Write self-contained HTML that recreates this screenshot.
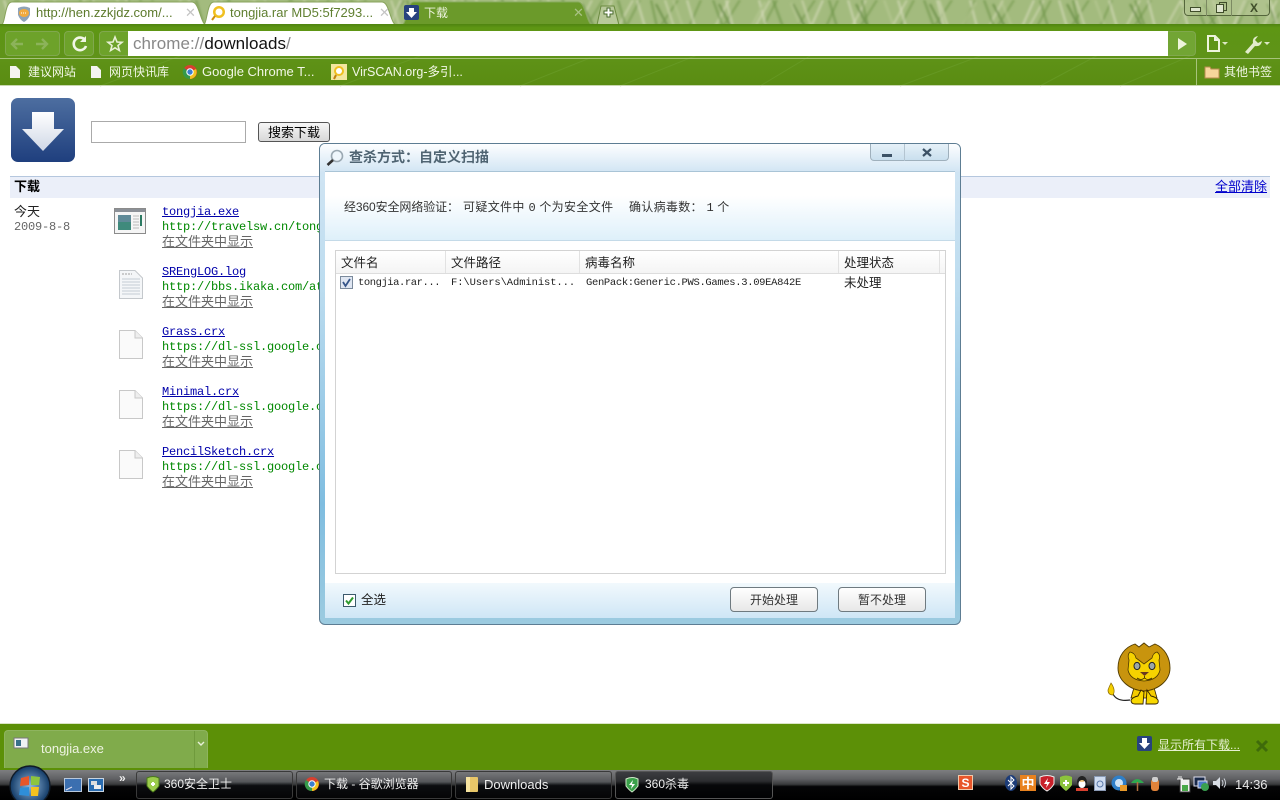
<!DOCTYPE html>
<html lang="zh"><head><meta charset="utf-8"><title>下载</title>
<style>
*{box-sizing:border-box}
html,body{margin:0;padding:0;width:1280px;height:800px;overflow:hidden;background:#fff;font:12px "Liberation Sans","Noto Sans CJK SC",sans-serif;color:#000}
.a{position:absolute;white-space:nowrap}
svg{position:absolute;overflow:visible}
.m{font-family:"Liberation Mono","Noto Sans CJK SC",monospace;font-size:12px;letter-spacing:-.2px;line-height:15px}
.tab{height:24px;top:1px;line-height:24px;font-size:13px;color:#5c7a2c}
.bm{top:63px;color:#f2f7e6;font-size:12px;line-height:18px}
.lk{color:#00a;text-decoration:underline}
.gr{color:#080}
.sh{color:#666;text-decoration:underline;font-family:"Liberation Sans","Noto Sans CJK SC",sans-serif;font-size:13px;letter-spacing:0}
.tb{top:771px;height:28px;border:1px solid #3a3a3a;border-radius:3px;background:linear-gradient(#77787a 0,#55565a 38%,#0c0d10 52%,#050506 100%);color:#eee;font-size:12px;line-height:25px}
.hd{top:251px;height:23px;border-right:1px solid #e2e2e2;line-height:25px;padding-left:5px;color:#222;font-size:12.5px;background:linear-gradient(#fff,#f4f4f4)}
.btn{top:587px;width:88px;height:25px;border:1px solid #6f7a80;border-radius:4px;background:linear-gradient(#fff,#e8e8e8);text-align:center;line-height:24px;color:#333;font-size:12px}
.rw{top:276px;font-size:10.5px;color:#222;line-height:15px}
</style></head><body>

<!-- tab strip: grass -->
<div class="a" style="left:0;top:0;width:1280px;height:27px;background:#a3bb7e;overflow:hidden">
<svg width="1280" height="27" style="left:0;top:0" fill="none">
<defs>
<filter id="bl" x="-5%" y="-20%" width="110%" height="140%"><feGaussianBlur stdDeviation="1"/></filter>
<pattern id="p1" width="137" height="27" patternUnits="userSpaceOnUse">
<g stroke-width="2.2" fill="none">
<path d="M4 27 16 0M38 27 55 0M78 27 92 0M112 27 130 0" stroke="#6f9648"/>
<path d="M30 27 44 0M70 27 85 0M126 27 117 0" stroke="#d6dbb8"/>
<path d="M46 27 34 4M120 27 108 4" stroke="#557f32"/>
</g>
</pattern>
<pattern id="p2" width="211" height="27" patternUnits="userSpaceOnUse">
<g stroke-width="2.4" fill="none">
<path d="M12 27 4 0M62 27 54 0M100 27 93 0M133 27 126 0M178 27 190 0" stroke="#d9ddc0"/>
<path d="M24 27 18 0M90 27 80 0M150 27 140 0M204 27 196 0" stroke="#6a9244"/>
<path d="M50 27 40 0M118 27 132 2M168 27 158 3" stroke="#b9c994"/>
</g>
</pattern>
</defs>
<g filter="url(#bl)"><rect width="1280" height="27" fill="url(#p1)" opacity=".6"/><rect width="1280" height="27" fill="url(#p2)" opacity=".6"/></g>
</svg>
</div>

<!-- tabs -->
<svg width="640" height="27" style="left:0;top:0">
<path d="M400 26 C408 26 406 2 414 2H578C586 2 586 26 594 26Z" fill="#6b9a2a" stroke="#86a95a"/>
<path d="M597 25 L601 6H614L619 25Z" fill="#b8c99a" stroke="#6b8a40"/>
<path d="M604 11h3v-3h3v3h3v3h-3v3h-3v-3h-3z" fill="#fff" stroke="#46682a"/>
<path d="M0 26 C6 26 4 2 12 2H192C200 2 200 26 208 26Z" fill="#fff" stroke="#88a35c"/>
<path d="M202 26 C208 26 206 2 214 2H382C390 2 390 26 398 26Z" fill="#fff" stroke="#88a35c"/>
</svg>
<svg width="16" height="16" style="left:16px;top:6px"><path d="M2 2Q8-1 14 2V9Q12 14 8 16 4 14 2 9Z" fill="#8fa3b8"/><ellipse cx="8" cy="7" rx="5" ry="4" fill="#f2a93c"/><path d="M5 7h6" stroke="#fff" stroke-dasharray="1 1"/></svg>
<div class="a tab" style="left:36px;width:140px">http://hen.zzkjdz.com/...</div>
<div class="a" style="left:185px;top:5px;color:#c4c4c4;font-size:13px">✕</div>
<svg width="16" height="16" style="left:210px;top:5px"><circle cx="9" cy="7" r="6" fill="#f0c020"/><circle cx="9" cy="7" r="3.5" fill="#fff"/><path d="M5 11 2 15" stroke="#d09010" stroke-width="2"/></svg>
<div class="a tab" style="left:230px;width:146px;color:#5f7f30">tongjia.rar MD5:5f7293...</div>
<div class="a" style="left:379px;top:5px;color:#c4c4c4;font-size:13px">✕</div>
<svg width="16" height="16" style="left:404px;top:5px"><rect width="15" height="15" rx="2" fill="#27427e"/><path d="M5 3h5v4h3L7.5 13 2 7h3z" fill="#fff"/></svg>
<div class="a tab" style="left:424px;color:#eef3df;font-size:12px">下载</div>
<div class="a" style="left:573px;top:5px;color:#a9c285;font-size:13px">✕</div>

<!-- window controls -->
<div class="a" style="left:1184px;top:0;width:86px;height:16px;border:1px solid #55663c;border-top:0;border-radius:0 0 4px 4px;background:rgba(190,205,160,.45)"></div>
<div class="a" style="left:1206px;top:0;width:1px;height:16px;background:#7c8a62"></div>
<div class="a" style="left:1231px;top:0;width:1px;height:16px;background:#7c8a62"></div>
<div class="a" style="left:1190px;top:7px;width:11px;height:5px;border:1px solid #3f4d2a;background:#dfe6cf"></div>
<div class="a" style="left:1219px;top:2px;width:8px;height:9px;border:1px solid #3f4d2a"></div>
<div class="a" style="left:1216px;top:4px;width:8px;height:9px;border:1px solid #3f4d2a;background:#dfe6cf"></div>
<div class="a" style="left:1250px;top:1px;color:#3f4d2a;font-size:12px;font-weight:bold;line-height:14px">X</div>

<!-- toolbar -->
<div class="a" style="left:0;top:24px;width:1280px;height:62px;background:linear-gradient(#4f8410 0,#5e9614 6%,#5f9318 50%,#5a8c12 100%)"></div>
<svg width="1280" height="60" style="left:0;top:26px" fill="none" stroke="#74a436" opacity=".4"><path d="M620 60 700 28M760 60 810 30M900 60 980 30M1040 60 1100 28M100 60 180 30M340 60 420 30M520 60 590 32M1120 60 1190 30"/></svg>
<div class="a" style="left:0;top:58px;width:1280px;height:1px;background:#a7c37b"></div>
<div class="a" style="left:0;top:85px;width:1280px;height:1px;background:#c9d7b0"></div>
<div class="a" style="left:5px;top:31px;width:55px;height:25px;border:1px solid #80a84e;border-radius:4px;background:#6da22a"></div>
<div class="a" style="left:64px;top:31px;width:30px;height:25px;border:1px solid #80a84e;border-radius:4px;background:#6da22a"></div>
<div class="a" style="left:99px;top:31px;width:30px;height:25px;border:1px solid #80a84e;border-radius:4px 0 0 4px;background:#6da22a"></div>
<div class="a" style="left:1168px;top:31px;width:28px;height:25px;border:1px solid #80a84e;border-left:0;border-radius:0 4px 4px 0;background:#72a534"></div>
<svg width="50" height="16" style="left:10px;top:36px" fill="none" stroke="#8cb35a" stroke-width="2.4"><path d="M2 8H13M7 3 2 8 7 13M26 8H37M32 3 37 8 32 13"/></svg>
<svg width="18" height="18" style="left:71px;top:35px" fill="none" stroke="#f1f6e6" stroke-width="2.6"><path d="M14 5A6.3 6.3 0 1 0 15 11"/><path d="M15 1V7H9Z" fill="#f1f6e6" stroke="none"/></svg>
<svg width="18" height="18" style="left:106px;top:35px" fill="none" stroke="#e8f0d4" stroke-width="1.6"><path d="M9 2 11 7 16 7.3 12 10.5 13.4 15.5 9 12.8 4.6 15.5 6 10.5 2 7.3 7 7Z"/></svg>
<div class="a" style="left:128px;top:31px;width:1040px;height:25px;background:#fff"></div>
<div class="a" style="left:133px;top:33px;font-size:17px;line-height:21px;color:#888;letter-spacing:.05px">chrome://<span style="color:#111">downloads</span>/</div>
<svg width="12" height="14" style="left:1177px;top:37px"><path d="M1 1 10 7 1 13Z" fill="#eef4dc"/></svg>
<svg width="22" height="18" style="left:1206px;top:35px" fill="none" stroke="#eef4dc" stroke-width="2"><path d="M2 1H9L13 5V16H2Z"/><path d="M9 1V5H13"/><path d="M16 7h6l-3 3z" fill="#dce7c4" stroke="none"/></svg>
<svg width="28" height="20" style="left:1244px;top:35px"><path d="M1 17 9 8Q8 2 14 1L11 5 14 8 18 6Q17 12 11 11L4 19Z" fill="#e2ebcc"/><path d="M20 7h6l-3 3z" fill="#dce7c4"/></svg>

<!-- bookmarks -->
<svg width="12" height="14" style="left:9px;top:65px"><path d="M1 1H7L11 5V13H1Z" fill="#f4f4f0"/></svg>
<div class="a bm" style="left:28px">建议网站</div>
<svg width="12" height="14" style="left:90px;top:65px"><path d="M1 1H7L11 5V13H1Z" fill="#f4f4f0"/></svg>
<div class="a bm" style="left:109px">网页快讯库</div>
<svg width="16" height="16" style="left:182px;top:64px"><circle cx="8" cy="8" r="7" fill="#d8402f"/><path d="M8 8 14 5A7 7 0 0 1 8 15Z" fill="#f1c21f"/><path d="M8 8 8 15A7 7 0 0 1 2 4Z" fill="#35994a"/><circle cx="8" cy="8" r="3.2" fill="#3b7fd0" stroke="#fff"/></svg>
<div class="a bm" style="left:202px;font-size:13px">Google Chrome T...</div>
<svg width="16" height="16" style="left:331px;top:64px"><rect width="16" height="16" fill="#f4e7a0"/><circle cx="8" cy="7" r="5" fill="#f0c020"/><circle cx="8" cy="7" r="3" fill="#fff"/><path d="M5 11 3 15" stroke="#c08010" stroke-width="2"/></svg>
<div class="a bm" style="left:352px;font-size:12.5px">VirSCAN.org-多引...</div>
<div class="a" style="left:1196px;top:58px;width:1px;height:27px;background:#a7c37b"></div>
<svg width="16" height="14" style="left:1204px;top:65px"><path d="M1 2H6L7 4H15V13H1Z" fill="#f7d69c" stroke="#b98c50"/></svg>
<div class="a bm" style="left:1224px">其他书签</div>

<!-- page -->
<svg width="65" height="65" style="left:11px;top:98px"><defs><linearGradient id="g1" x1="0" y1="0" x2="0" y2="1"><stop offset="0" stop-color="#4d6ea0"/><stop offset="1" stop-color="#1f3f7e"/></linearGradient><linearGradient id="g2" x1="0" y1="0" x2="0" y2="1"><stop offset="0" stop-color="#fff"/><stop offset="1" stop-color="#cfd7e6"/></linearGradient></defs><rect x="0" y="0" width="64" height="64" rx="7" fill="url(#g1)"/><path d="M21 14H43V31H53L32 53 11 31H21Z" fill="url(#g2)"/></svg>
<div class="a" style="left:91px;top:121px;width:155px;height:22px;border:1px solid #aaa;background:#fff"></div>
<div class="a" style="left:258px;top:122px;width:72px;height:20px;border:1px solid #555;border-radius:3px;background:linear-gradient(#f6f6f6,#d8d8d8);text-align:center;line-height:20px;font-size:13px">搜索下载</div>

<div class="a" style="left:10px;top:176px;width:1260px;height:22px;background:#ebeff9;border-top:1px solid #b5c7de"></div>
<div class="a" style="left:14px;top:179px;font-weight:bold;font-size:13px;line-height:16px">下载</div>
<div class="a" style="left:1215px;top:179px;font-size:13px;line-height:16px;color:#00c;text-decoration:underline">全部清除</div>
<div class="a" style="left:14px;top:204px;font-size:13px;line-height:16px;color:#222">今天</div>
<div class="a m" style="left:14px;top:220px;color:#666">2009-8-8</div>

<svg width="32" height="28" style="left:114px;top:208px"><rect x=".5" y=".5" width="31" height="25" fill="#f5f5f5" stroke="#8b8b8b"/><rect x="1" y="1" width="30" height="3" fill="#8b9097"/><rect x="4" y="7" width="13" height="15" fill="#3f8a7c"/><rect x="4" y="7" width="13" height="7" fill="#5f8a98"/><path d="M19 8h6M19 11h6M19 14h6M19 17h6M19 20h6" stroke="#bbb"/><rect x="26" y="7" width="2" height="11" fill="#2c7a62"/></svg>
<div class="a m lk" style="left:162px;top:205px">tongjia.exe</div>
<div class="a m gr" style="left:162px;top:220px;width:158px;overflow:hidden">http://travelsw.cn/tongjia.exe</div>
<div class="a sh" style="left:162px;top:234px;line-height:15px">在文件夹中显示</div>

<svg width="24" height="30" style="left:119px;top:270px"><path d="M.5 .5H16L23.5 8V28.5H.5Z" fill="#f4f6f8" stroke="#c4c8cc"/><path d="M3 9H21M3 12H21M3 15H21M3 18H21M3 21H21M3 24H21" stroke="#c4ccd4"/><path d="M3 4h10" stroke="#a0a0a0" stroke-dasharray="2 1"/></svg>
<div class="a m lk" style="left:162px;top:265px">SREngLOG.log</div>
<div class="a m gr" style="left:162px;top:280px;width:158px;overflow:hidden">http://bbs.ikaka.com/attachment</div>
<div class="a sh" style="left:162px;top:294px;line-height:15px">在文件夹中显示</div>

<svg width="24" height="30" style="left:119px;top:330px"><path d="M.5 .5H16L23.5 8V28.5H.5Z" fill="#fafafa" stroke="#c8c8c8"/><path d="M16 .5V8H23.5" fill="#eee" stroke="#c8c8c8"/></svg>
<div class="a m lk" style="left:162px;top:325px">Grass.crx</div>
<div class="a m gr" style="left:162px;top:340px;width:158px;overflow:hidden">https://dl-ssl.google.com/chrome</div>
<div class="a sh" style="left:162px;top:354px;line-height:15px">在文件夹中显示</div>

<svg width="24" height="30" style="left:119px;top:390px"><path d="M.5 .5H16L23.5 8V28.5H.5Z" fill="#fafafa" stroke="#c8c8c8"/><path d="M16 .5V8H23.5" fill="#eee" stroke="#c8c8c8"/></svg>
<div class="a m lk" style="left:162px;top:385px">Minimal.crx</div>
<div class="a m gr" style="left:162px;top:400px;width:158px;overflow:hidden">https://dl-ssl.google.com/chrome</div>
<div class="a sh" style="left:162px;top:414px;line-height:15px">在文件夹中显示</div>

<svg width="24" height="30" style="left:119px;top:450px"><path d="M.5 .5H16L23.5 8V28.5H.5Z" fill="#fafafa" stroke="#c8c8c8"/><path d="M16 .5V8H23.5" fill="#eee" stroke="#c8c8c8"/></svg>
<div class="a m lk" style="left:162px;top:445px">PencilSketch.crx</div>
<div class="a m gr" style="left:162px;top:460px;width:158px;overflow:hidden">https://dl-ssl.google.com/chrome</div>
<div class="a sh" style="left:162px;top:474px;line-height:15px">在文件夹中显示</div>

<!-- dialog -->
<div class="a" style="left:319px;top:143px;width:642px;height:482px;border:1px solid #5d7d93;border-radius:6px;background:linear-gradient(#fff 0,#cfe4f3 6%,#bcdcef 30%,#7fbde0 75%,#9ccbe0 100%);overflow:hidden"></div>
<div class="a" style="left:320px;top:144px;width:640px;height:27px;border-radius:5px 5px 0 0;background:linear-gradient(#fdfeff,#d3e6f4)"></div>
<svg width="18" height="18" style="left:326px;top:149px"><circle cx="11" cy="7" r="5.5" fill="#eef6fc" stroke="#9aa8b2" stroke-width="1.6"/><path d="M7 11 1.5 16" stroke="#333" stroke-width="2.6"/></svg>
<div class="a" style="left:349px;top:148px;font-size:14px;line-height:18px;font-weight:bold;color:#4f6472">查杀方式：自定义扫描</div>
<div class="a" style="left:870px;top:144px;width:79px;height:17px;border:1px solid #9fb0bc;border-top:0;border-radius:0 0 4px 4px;background:linear-gradient(#e6f1f8,#c9dfee)"></div>
<div class="a" style="left:904px;top:144px;width:1px;height:17px;background:#b4c5d1"></div>
<div class="a" style="left:882px;top:154px;width:10px;height:3px;background:#3c5266"></div>
<svg width="10" height="10" style="left:922px;top:148px"><path d="M1 1 9 8M9 1 1 8" stroke="#3c5266" stroke-width="2.2"/></svg>

<div class="a" style="left:325px;top:171px;width:630px;height:447px;background:#fff;border-top:1px solid #a9c4d6"></div>
<div class="a" style="left:325px;top:172px;width:630px;height:69px;background:linear-gradient(#fff 35%,#def0fa);border-bottom:1px solid #c4dae8"></div>
<div class="a" style="left:344px;top:199px;font-size:12px;line-height:16px;color:#333;letter-spacing:-.1px">经360安全网络验证：</div>
<div class="a" style="left:463px;top:199px;font-size:12px;line-height:16px;color:#333;letter-spacing:.35px">可疑文件中 <span class="m" style="letter-spacing:0">0</span> 个为安全文件</div>
<div class="a" style="left:629px;top:199px;font-size:12px;line-height:16px;color:#333;letter-spacing:.3px">确认病毒数： <span class="m" style="letter-spacing:0">1</span> 个</div>

<div class="a" style="left:335px;top:250px;width:611px;height:324px;border:1px solid #d3d3d3;background:#fff"></div>
<div class="a hd" style="left:336px;width:110px">文件名</div>
<div class="a hd" style="left:446px;width:134px">文件路径</div>
<div class="a hd" style="left:580px;width:259px">病毒名称</div>
<div class="a hd" style="left:839px;width:101px">处理状态</div>
<div class="a" style="left:940px;top:251px;width:5px;height:23px;background:linear-gradient(#fff,#f4f4f4)"></div>
<div class="a" style="left:336px;top:273px;width:609px;height:1px;background:#ddd"></div>
<svg width="13" height="13" style="left:340px;top:276px"><rect x=".5" y=".5" width="12" height="12" fill="#dfe6f2" stroke="#7b8a9c"/><path d="M3 6 5.5 10 10 3" fill="none" stroke="#36558a" stroke-width="1.8"/></svg>
<div class="a m rw" style="left:358px;letter-spacing:-.44px">tongjia.rar...</div>
<div class="a m rw" style="left:451px;letter-spacing:-.1px">F:\Users\Administ...</div>
<div class="a m rw" style="left:586px;letter-spacing:-.33px">GenPack:Generic.PWS.Games.3.09EA842E</div>
<div class="a" style="left:844px;top:275px;font-size:12.5px;line-height:16px;color:#222">未处理</div>

<div class="a" style="left:325px;top:583px;width:630px;height:35px;background:linear-gradient(#f2f9fd,#cfe6f6)"></div>
<svg width="13" height="13" style="left:343px;top:594px"><rect x=".5" y=".5" width="12" height="12" fill="#fff" stroke="#3c5a6c"/><path d="M3 6.5 5.5 9.5 10 3.5" fill="none" stroke="#2f9a2f" stroke-width="2"/></svg>
<div class="a" style="left:361px;top:592px;font-size:12.5px;line-height:16px;color:#222">全选</div>
<div class="a btn" style="left:730px">开始处理</div>
<div class="a btn" style="left:838px">暂不处理</div>

<!-- lion -->
<svg width="70" height="70" style="left:1105px;top:640px">
<path d="M8 54Q12 62 25 60" fill="none" stroke="#222" stroke-width="1.2"/>
<path d="M6 43Q11 50 8 55 3 55 3 50Q4 47 6 43Z" fill="#f5d000" stroke="#8a6a00" stroke-width=".7"/>
<path d="M30 44H48L52 58H26Z" fill="#f4cc00" stroke="#332200" stroke-width=".8"/>
<path d="M30 4 34 7 39 3 44 7 50 4C60 8 65 18 65 28 65 40 54 50 39 51 24 50 13 40 13 28 13 16 20 7 30 4Z" fill="#c8940e" stroke="#4f3a00" stroke-width=".9"/>
<path d="M25 12Q22 15 24 20L23 30Q25 40 39 41 53 40 55 30L54 20Q56 15 52 12 48 13 47 18L39 24 31 18Q30 13 25 12Z" fill="#f6d200" stroke="#4f3a00" stroke-width=".8"/>
<ellipse cx="32" cy="26" rx="3" ry="3.6" fill="#9ba7a8" stroke="#222"/><ellipse cx="47" cy="26" rx="3" ry="3.6" fill="#9ba7a8" stroke="#222"/>
<path d="M35 32H44L39.5 36Z" fill="#6a3a20"/><path d="M39.5 36V38M32 38Q36 41 39.5 38 43 41 47 38" fill="none" stroke="#332200" stroke-width=".8"/>
<path d="M36 50 33 56Q28 57 26 60 26 64 30 64H38L39 52ZM42 50 41 64H50Q54 64 53 60 51 57 46 56Z" fill="#f8d800" stroke="#332200" stroke-width=".9"/>
</svg>

<!-- download shelf -->
<div class="a" style="left:0;top:723px;width:1280px;height:1px;background:#dbe6c6"></div>
<div class="a" style="left:0;top:724px;width:1280px;height:46px;background:#5c9007"></div>
<div class="a" style="left:4px;top:730px;width:204px;height:38px;border:1px solid #8eb45e;border-bottom:0;border-radius:4px 4px 0 0;background:#80ab4b"></div>
<div class="a" style="left:194px;top:731px;width:1px;height:37px;background:#6f9a3c"></div>
<svg width="15" height="11" style="left:14px;top:738px"><rect width="14" height="10" fill="#f0f2f4" stroke="#777"/><rect x="2" y="2" width="5" height="6" fill="#39708a"/></svg>
<div class="a" style="left:41px;top:740px;font-size:13px;line-height:17px;color:#eef3e2">tongjia.exe</div>
<svg width="8" height="6" style="left:197px;top:741px"><path d="M1 1 4 4 7 1" fill="none" stroke="#e8f0d8" stroke-width="1.4"/></svg>
<svg width="16" height="16" style="left:1137px;top:736px"><rect width="15" height="15" rx="2" fill="#27427e"/><path d="M5 2h5v5h3L7.5 13 2 7h3z" fill="#fff"/></svg>
<div class="a" style="left:1158px;top:737px;font-size:12px;line-height:17px;color:#e6f0d2;text-decoration:underline">显示所有下载...</div>
<svg width="12" height="12" style="left:1256px;top:740px"><path d="M1 1 11 11M11 1 1 11" stroke="#3f6b0a" stroke-width="3"/></svg>

<!-- taskbar -->
<div class="a" style="left:0;top:770px;width:1280px;height:30px;background:linear-gradient(#7d7e80 0,#5f6063 30%,#38393b 48%,#050506 55%,#000 100%)"></div>
<svg width="44" height="40" style="left:8px;top:760px"><defs><radialGradient id="o"><stop offset="0" stop-color="#8fb6dc"/><stop offset="1" stop-color="#123a66"/></radialGradient></defs><circle cx="22" cy="26" r="20" fill="url(#o)" stroke="#101a26" stroke-width="1.4"/><path d="M13 18 21 16V25L12 26Z" fill="#e8562a"/><path d="M23 16 32 17 31 25 23 25Z" fill="#8dc53e"/><path d="M12 28 21 27V36L11 35Z" fill="#2f8ed8"/><path d="M23 27 31 27 30 36 23 36Z" fill="#f4c21f"/></svg>
<svg width="20" height="15" style="left:64px;top:778px"><rect x=".5" y=".5" width="17" height="13" fill="#3b6fb0" stroke="#b8c8dc"/><path d="M2 12 8 9" stroke="#dde" /></svg>
<svg width="18" height="15" style="left:88px;top:778px"><rect x=".5" y=".5" width="15" height="13" fill="#2a6cb0" stroke="#c8d4e0"/><rect x="3" y="3" width="6" height="4" fill="#ddd"/><rect x="6" y="7" width="7" height="4" fill="#eee"/></svg>
<div class="a" style="left:119px;top:771px;color:#eee;font-size:12px;font-weight:bold;line-height:14px">»</div>

<div class="a tb" style="left:136px;width:157px;padding-left:27px">360安全卫士</div>
<svg width="14" height="16" style="left:146px;top:776px"><path d="M1 2Q7-1 13 2V10Q10 14 7 16 4 14 1 10Z" fill="#9ccc4c" stroke="#4a7a1a"/><path d="M5 8h4M7 6v4" stroke="#fff" stroke-width="2"/></svg>
<div class="a tb" style="left:296px;width:156px;padding-left:27px">下载 - 谷歌浏览器</div>
<svg width="16" height="16" style="left:304px;top:776px"><circle cx="8" cy="8" r="7" fill="#d8402f"/><path d="M8 8 14 5A7 7 0 0 1 8 15Z" fill="#f1c21f"/><path d="M8 8 8 15A7 7 0 0 1 2 4Z" fill="#35994a"/><circle cx="8" cy="8" r="3.2" fill="#3b7fd0" stroke="#fff"/></svg>
<div class="a tb" style="left:455px;width:157px;padding-left:28px;font-size:13px">Downloads</div>
<svg width="14" height="16" style="left:465px;top:777px"><rect x="1" y="0" width="12" height="15" rx="1" fill="#e8c668"/><rect x="1" y="0" width="4" height="15" fill="#f6e3a0"/></svg>
<div class="a tb" style="left:615px;width:158px;padding-left:29px;background:linear-gradient(#3c3d40 0,#2c2d30 35%,#07080a 50%,#020203 100%);border-color:#555">360杀毒</div>
<svg width="14" height="15" style="left:625px;top:777px"><path d="M1 2Q7-1 13 2V9Q10 13 7 15 4 13 1 9Z" fill="#3aa04a" stroke="#cfe8c8"/><path d="M8 3 4 8H7L6 12 10 7H7Z" fill="#fff"/></svg>

<!-- tray -->
<svg width="16" height="16" style="left:958px;top:775px"><rect x=".5" y=".5" width="14" height="14" fill="#e8562a" stroke="#f2c8a8"/><text x="7.5" y="12" text-anchor="middle" font-size="12" font-weight="bold" fill="#fff" font-family="Liberation Sans">S</text></svg>
<svg width="12" height="16" style="left:1005px;top:775px"><ellipse cx="6" cy="8" rx="6" ry="8" fill="#1c3c78"/><path d="M3 5 9 11 6 14V2L9 5 3 11" fill="none" stroke="#fff"/></svg>
<svg width="17" height="17" style="left:1020px;top:775px"><rect width="16" height="16" fill="#e8821e"/><text x="8" y="13" text-anchor="middle" font-size="13" font-weight="bold" fill="#fff" font-family="Noto Sans CJK SC">中</text></svg>
<svg width="16" height="17" style="left:1039px;top:775px"><path d="M1 2Q8-1 15 2V9Q12 14 8 16 4 14 1 9Z" fill="#c8202a" stroke="#eee"/><path d="M9 3 5 9H8L7 13 11 7H8Z" fill="#fff"/></svg>
<svg width="14" height="17" style="left:1059px;top:775px"><path d="M1 2Q7-1 13 2V10Q10 14 7 16 4 14 1 10Z" fill="#8cc43c"/><path d="M4 8h6M7 5v6" stroke="#fff" stroke-width="2"/></svg>
<svg width="14" height="17" style="left:1075px;top:775px"><ellipse cx="7" cy="7" rx="5" ry="6" fill="#222"/><ellipse cx="7" cy="9" rx="3.5" ry="4" fill="#fff"/><path d="M1 13H13V16H1Z" fill="#d8402f"/><path d="M5 6h4" stroke="#e8a020"/></svg>
<svg width="12" height="15" style="left:1094px;top:776px"><rect x=".5" y=".5" width="11" height="14" fill="#cfdcf0" stroke="#8a9ab4"/><circle cx="6" cy="8" r="3" fill="none" stroke="#5a78a8"/></svg>
<svg width="17" height="17" style="left:1111px;top:775px"><circle cx="8" cy="8" r="7.5" fill="#2f7fc8"/><circle cx="8" cy="8" r="4" fill="#cfe4f6"/><rect x="9" y="10" width="7" height="6" fill="#e89a2a"/></svg>
<svg width="15" height="16" style="left:1130px;top:776px"><path d="M1 7Q7-1 14 7Z" fill="#2fa84f"/><path d="M7.5 6V15" stroke="#b07040" stroke-width="1.5"/></svg>
<svg width="10" height="15" style="left:1150px;top:777px"><rect x="1" y="2" width="8" height="12" rx="3" fill="#e0833a"/><rect x="2" y="0" width="6" height="5" rx="2" fill="#cfcfcf"/></svg>
<svg width="14" height="16" style="left:1177px;top:776px"><rect x="3" y="3" width="10" height="13" fill="#f0f0f0" stroke="#333"/><rect x="5" y="9" width="6" height="6" fill="#48a848"/><path d="M0 3h6M2 0v3M4 0v3" stroke="#eee"/></svg>
<svg width="18" height="16" style="left:1193px;top:776px"><rect x="1" y="1" width="11" height="9" fill="#1a2a4a" stroke="#dde"/><rect x="5" y="5" width="9" height="7" fill="#4a7ac8" stroke="#dde"/><circle cx="12" cy="11" r="4" fill="#3aa050"/></svg>
<svg width="14" height="14" style="left:1213px;top:776px"><path d="M0 5H3L7 1V13L3 9H0Z" fill="#d8dde4"/><path d="M9 4Q11 7 9 10M11 2.5Q14 7 11 11.5" fill="none" stroke="#cfd4dc"/></svg>
<div class="a" style="left:1235px;top:777px;font-size:13px;line-height:16px;color:#e6e6e6">14:36</div>
</body></html>
